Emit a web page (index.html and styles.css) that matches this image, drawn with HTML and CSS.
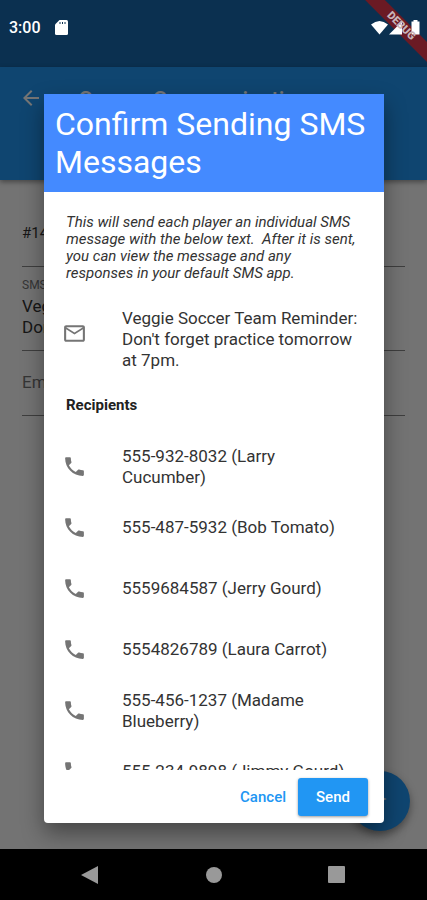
FILE: index.html
```html
<!DOCTYPE html>
<html lang="en">
<head>
<meta charset="UTF-8">
<meta name="viewport" content="width=device-width, initial-scale=1.0">
<title>Confirm Sending SMS Messages</title>
<link rel="stylesheet" href="styles.css">
</head>
<body>

<svg class="sprite" aria-hidden="true">
  <symbol id="phone" viewBox="0 0 24 24">
    <path d="M6.62 10.79c1.44 2.83 3.76 5.14 6.59 6.59l2.2-2.2c.27-.27.67-.36 1.02-.24 1.12.37 2.33.57 3.57.57.55 0 1 .45 1 1V20c0 .55-.45 1-1 1-9.39 0-17-7.61-17-17 0-.55.45-1 1-1h3.5c.55 0 1 .45 1 1 0 1.25.2 2.45.57 3.57.11.35.03.74-.25 1.02l-2.2 2.2z"/>
  </symbol>
  <symbol id="mail" viewBox="0 0 24 24">
    <path d="M20 4H4c-1.1 0-1.99.9-1.99 2L2 18c0 1.1.9 2 2 2h16c1.1 0 2-.9 2-2V6c0-1.1-.9-2-2-2zm0 14H4V8l8 5 8-5v10zm-8-7L4 6h16l-8 5z"/>
  </symbol>
</svg>

<header class="status-bar">
  <span class="time">3:00</span>
  <svg class="sd-card" viewBox="0 0 13 15"><path d="M4.500 0H11.500Q13 0 13 1.500V13.500Q13 15 11.500 15H1.500Q0 15 0 13.500V4.500z" fill="#fff"/><path d="M5 2v2M7.500 2v2M10 2v2" stroke="#0b3050"/></svg>
  <div class="ribbon"></div>
  <svg class="signals" viewBox="0 0 50 16">
    <path d="M0 4.500Q8.500-2.500 17 4.500L8.500 14.500z"/>
    <path d="M18 14.500L31 1.500V14.500z"/>
    <path d="M40.500 1.500h2V0h4v1.500h2V14.500h-8z"/>
  </svg>
  <div class="ribbon ribbon-text">DEBUG</div>
</header>

<main class="screen">
  <div class="app-bar">
    <button class="back" aria-label="Back">
      <svg viewBox="0 0 24 24"><path d="M20 11H7.830l5.590-5.590L12 4l-8 8 8 8 1.410-1.410L7.830 13H20v-2z"/></svg>
    </button>
    <h1>Soccer Communication</h1>
  </div>
  <form class="fields">
    <div class="field"><span class="value">#1401</span></div>
    <div class="field sms"><label for="sms">SMS Message</label><textarea id="sms" rows="2">Veggie Soccer Team Reminder:
Don't forget practice tomorrow</textarea></div>
    <div class="field email"><input type="text" placeholder="Email Message" aria-label="Email Message"></div>
  </form>
  <button class="fab" aria-label="Send message">
    <svg viewBox="0 0 24 24"><path d="M2 21l19-9L2 3v7l15 2-15 2z"/></svg>
  </button>

  <div class="scrim">
    <div class="dialog" role="dialog" aria-labelledby="dialog-title">
      <h2 id="dialog-title">Confirm Sending SMS Messages</h2>
      <div class="dialog-body">
        <p class="note">This will send each player an individual SMS message with the below text.&nbsp; After it is sent, you can view the message and any responses in your default SMS app.</p>
        <div class="tile message">
          <svg><use href="#mail"/></svg>
          <span>Veggie Soccer Team Reminder: Don't forget practice tomorrow at 7pm.</span>
        </div>
        <h3>Recipients</h3>
        <div class="tile"><svg><use href="#phone"/></svg><span>555-932-8032 (Larry Cucumber)</span></div>
        <div class="tile"><svg><use href="#phone"/></svg><span>555-487-5932 (Bob Tomato)</span></div>
        <div class="tile"><svg><use href="#phone"/></svg><span>5559684587 (Jerry Gourd)</span></div>
        <div class="tile"><svg><use href="#phone"/></svg><span>5554826789 (Laura Carrot)</span></div>
        <div class="tile"><svg><use href="#phone"/></svg><span>555-456-1237 (Madame Blueberry)</span></div>
        <div class="tile"><svg><use href="#phone"/></svg><span>555-234-9898 (Jimmy Gourd)</span></div>
      </div>
      <div class="actions">
        <button class="cancel">Cancel</button>
        <button class="send">Send</button>
      </div>
    </div>
  </div>
</main>

<nav class="nav-bar">
  <button aria-label="Back"><svg viewBox="0 0 18 18"><path d="M17 0V18L0 9z"/></svg></button>
  <button aria-label="Home"><svg viewBox="0 0 18 18"><circle cx="9" cy="9" r="8"/></svg></button>
  <button aria-label="Recents"><svg viewBox="0 0 18 18"><rect width="17" height="17" rx="1"/></svg></button>
</nav>

</body>
</html>
```
FILE: styles.css
```css
* {
  box-sizing: border-box;
}
body {
  display: flex;
  flex-direction: column;
  height: 100vh;
  margin: 0;
  background-color: #000;
  font-family: Roboto, "Liberation Sans", sans-serif;
  color: #333;
}
h1, h2, h3, p {
  margin: 0;
}
button {
  padding: 0;
  border: none;
  background: none;
  font: inherit;
  cursor: pointer;
}
.sprite {
  position: absolute;
  width: 0;
  height: 0;
}

/* Status bar */
.status-bar {
  position: relative;
  display: flex;
  align-items: center;
  gap: 14px;
  height: 67px;
  padding: 0 0 12px 9px;
  background-color: #0b3050;
  color: #fff;
  overflow: hidden;
}
.time {
  font-size: 16px;
  font-weight: 500;
}
.sd-card {
  width: 13px;
  height: 15px;
}
.signals {
  position: relative;
  width: 50px;
  height: 16px;
  margin-left: auto;
  margin-right: 6px;
  fill: #fff;
}
.ribbon {
  position: absolute;
  top: 19px;
  right: -34px;
  width: 120px;
  height: 14px;
  background-color: #6b1a24;
  transform: rotate(45deg);
}
.ribbon-text {
  background: none;
  color: #c9b4b8;
  font-size: 11px;
  font-weight: 900;
  line-height: 14px;
  text-align: center;
}

/* Page behind the dialog */
.screen {
  position: relative;
  display: flex;
  flex-direction: column;
  flex: 1;
  min-height: 0;
  background-color: #fafafa;
}
.app-bar {
  display: flex;
  align-items: flex-start;
  gap: 36px;
  height: 113px;
  padding: 19px 19px 0;
  background-color: #2196f3;
  box-shadow: 0 2px 5px rgba(0,0,0,0.4);
}
.app-bar h1 {
  color: #fff;
  font-size: 22px;
  font-weight: 500;
  line-height: 27px;
}
.back {
  width: 24px;
  height: 24px;
}
.back svg {
  width: 24px;
  height: 24px;
  fill: #fff;
}
.fields {
  padding: 0 22px;
  font-size: 17px;
  line-height: 21px;
}
.field {
  display: flex;
  flex-direction: column;
  justify-content: flex-end;
  height: 87px;
  padding-bottom: 22px;
  border-bottom: 1px solid #888;
}
.field .value {
  font-size: 15px;
}
.field.sms {
  height: 84px;
  padding-bottom: 12px;
}
.field label {
  color: #757575;
  font-size: 12px;
}
.field textarea, .field input {
  width: 100%;
  padding: 0;
  border: none;
  background: none;
  color: inherit;
  font: inherit;
  resize: none;
  overflow: hidden;
}
.field.email {
  height: 65px;
}
.field input::placeholder {
  color: #757575;
}
.fab {
  position: absolute;
  right: 17px;
  bottom: 18px;
  width: 60px;
  height: 60px;
  border-radius: 50%;
  background-color: #2196f3;
  box-shadow: 0 4px 8px rgba(0,0,0,0.4);
}
.fab svg {
  width: 18px;
  height: 18px;
  fill: #fff;
}

/* Dialog */
.scrim {
  position: absolute;
  inset: 0;
  padding: 27px 43px 26px 44px;
  background-color: rgba(0,0,0,0.54);
}
.dialog {
  display: flex;
  flex-direction: column;
  height: 100%;
  border-radius: 4px;
  background-color: #fff;
  box-shadow: 0 10px 22px rgba(0,0,0,0.4);
}
.dialog h2 {
  padding: 11px;
  background-color: #448aff;
  color: #fff;
  font-size: 32px;
  font-weight: 400;
  line-height: 38px;
}
.dialog-body {
  flex: 1;
  min-height: 0;
  padding: 22px 22px 0;
  overflow: hidden;
}
.note {
  margin-bottom: 26px;
  padding-right: 4px;
  font-size: 15px;
  font-style: italic;
  line-height: 17px;
}
.dialog h3 {
  margin: 26px 0 22px;
  color: #212121;
  font-size: 15px;
  font-weight: 700;
  line-height: 17px;
}
.tile {
  display: flex;
  align-items: center;
  gap: 35px;
  min-height: 61px;
  padding-right: 10px;
  font-size: 17px;
  line-height: 21px;
}
.tile svg {
  flex: none;
  width: 25px;
  height: 25px;
  margin-left: -4px;
  fill: #757575;
}
.message {
  align-items: flex-start;
  padding-right: 0;
}
.message svg {
  margin-top: 13px;
}
.actions {
  display: flex;
  justify-content: flex-end;
  align-items: center;
  gap: 12px;
  height: 53px;
  padding-right: 16px;
  font-size: 15px;
  font-weight: 500;
}
.cancel {
  color: #2196f3;
}
.send {
  width: 70px;
  height: 38px;
  border-radius: 3px;
  background-color: #2196f3;
  box-shadow: 0 1px 3px rgba(0,0,0,0.4);
  color: #fff;
}

/* Navigation bar */
.nav-bar {
  display: flex;
  justify-content: space-between;
  align-items: center;
  height: 51px;
  padding: 0 19%;
}
.nav-bar svg {
  display: block;
  width: 18px;
  height: 18px;
  fill: #999;
}
```
